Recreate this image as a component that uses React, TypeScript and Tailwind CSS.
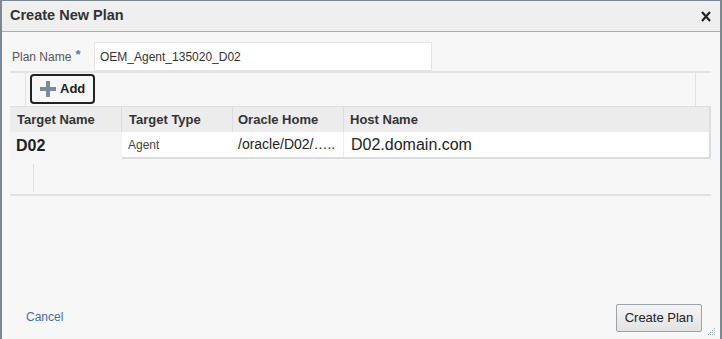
import React from "react";

export default function App() {
  const font = { fontFamily: '"Liberation Sans", Arial, sans-serif' };
  return (
    <div
      className="w-[722px] h-[339px] bg-[#f7f7f7] border-l-2 border-r-2 border-t border-[#7d8893] flex flex-col overflow-hidden"
      style={font}
    >
      {/* Title bar */}
      <div className="h-[31px] shrink-0 bg-[#efefef] border-b border-[#a3aeb8] flex items-center justify-between pl-[8px] pr-[9px]">
        <span className="text-[14.5px] font-bold text-[#333]">Create New Plan</span>
        <svg width="10" height="11" viewBox="0 0 10 11">
          <path d="M1 1 L9 10 M9 1 L1 10" stroke="#222" strokeWidth="2.2" />
        </svg>
      </div>

      <div className="pl-[8px] pr-[9px]">
        {/* Plan name */}
        <div className="flex items-center mt-[10px] h-[29px]">
          <div className="w-[84px] pl-[2px] text-[12px] text-[#555] flex items-start">
            Plan Name <span className="text-[#3b82c4] ml-[4px] text-[13px] font-bold -mt-[3px]">*</span>
          </div>
          <div className="w-[338px] h-[29px] bg-white border border-[#e6e6e6] flex items-center pl-[5px] text-[12px] text-[#333]">
            OEM_Agent_135020_D02
          </div>
        </div>

        {/* Toolbar */}
        <div className="border-t-2 border-[#dfe3e7] h-[35px] flex">
          <div className="ml-[15px] w-[671px] border-l border-r border-[#dfe3e7] pl-[4px] pt-[1px]">
            <div className="w-[65px] h-[30px] border-2 border-[#222] rounded-[4px] flex items-center pl-[8px] gap-[4px]">
              <svg width="16" height="16" viewBox="0 0 16 16">
                <rect x="6" y="0" width="4" height="16" fill="#7c8a98" />
                <rect x="0" y="6" width="16" height="4" fill="#7c8a98" />
              </svg>
              <span className="text-[13px] font-bold text-[#222]">Add</span>
            </div>
          </div>
        </div>

        {/* Table */}
        <div className="w-[701px]">
          <div className="flex h-[26px] bg-[#ececec] border-t border-[#e0e0e0] text-[13px] font-bold text-[#333]">
            <div className="w-[112px] pl-[7px] flex items-center border-r border-[#dcdcdc]">Target Name</div>
            <div className="w-[111px] pl-[7px] flex items-center border-r border-[#dcdcdc]">Target Type</div>
            <div className="w-[111px] pl-[5px] flex items-center border-r border-[#dcdcdc]">Oracle Home</div>
            <div className="flex-1 pl-[6px] flex items-center border-r-2 border-[#dcdfe2]">Host Name</div>
          </div>
          <div className="flex h-[27px]">
            <div className="w-[112px] pl-[6px] flex items-center bg-[#f5f5f5] text-[16px] font-bold text-[#222]">D02</div>
            <div className="flex-1 flex bg-white border-b-2 border-r-2 border-[#d8dde2]">
              <div className="w-[111px] pl-[6px] flex items-center text-[12px] text-[#444]">Agent</div>
              <div className="w-[111px] pl-[5px] flex items-center text-[14px] text-[#222] border-r border-[#eeeeee]">/oracle/D02/…..</div>
              <div className="flex-1 pl-[7px] flex items-center text-[16px] text-[#222]">D02.domain.com</div>
            </div>
          </div>
          <div className="h-[35px] pt-[5px]">
            <div className="ml-[23px] w-px h-[28px] bg-[#dde1e5]" />
          </div>
          <div className="h-[2px] bg-[#dfe3e7]" />
        </div>
      </div>

      {/* Footer */}
      <div className="flex-1 flex items-end justify-between pl-[24px] pr-[18px] pb-[7px] relative">
        <span className="text-[12px] text-[#3d6fa8] mb-[6px]">Cancel</span>
        <div className="w-[86px] h-[28px] border border-[#9aa3ab] rounded-[2px] bg-gradient-to-b from-[#f4f4f4] to-[#e3e3e3] flex items-center justify-center text-[13px] text-[#222]">
          Create Plan
        </div>
        <svg className="absolute right-[4px] bottom-[3px]" width="9" height="9" viewBox="0 0 9 9">
          {[
            [7, 1], [5, 3], [7, 3], [3, 5], [5, 5], [7, 5], [1, 7], [3, 7], [5, 7], [7, 7],
          ].map(([x, y], i) => (
            <rect key={i} x={x} y={y} width="1" height="1" fill="#9aa3ab" />
          ))}
        </svg>
      </div>
    </div>
  );
}
